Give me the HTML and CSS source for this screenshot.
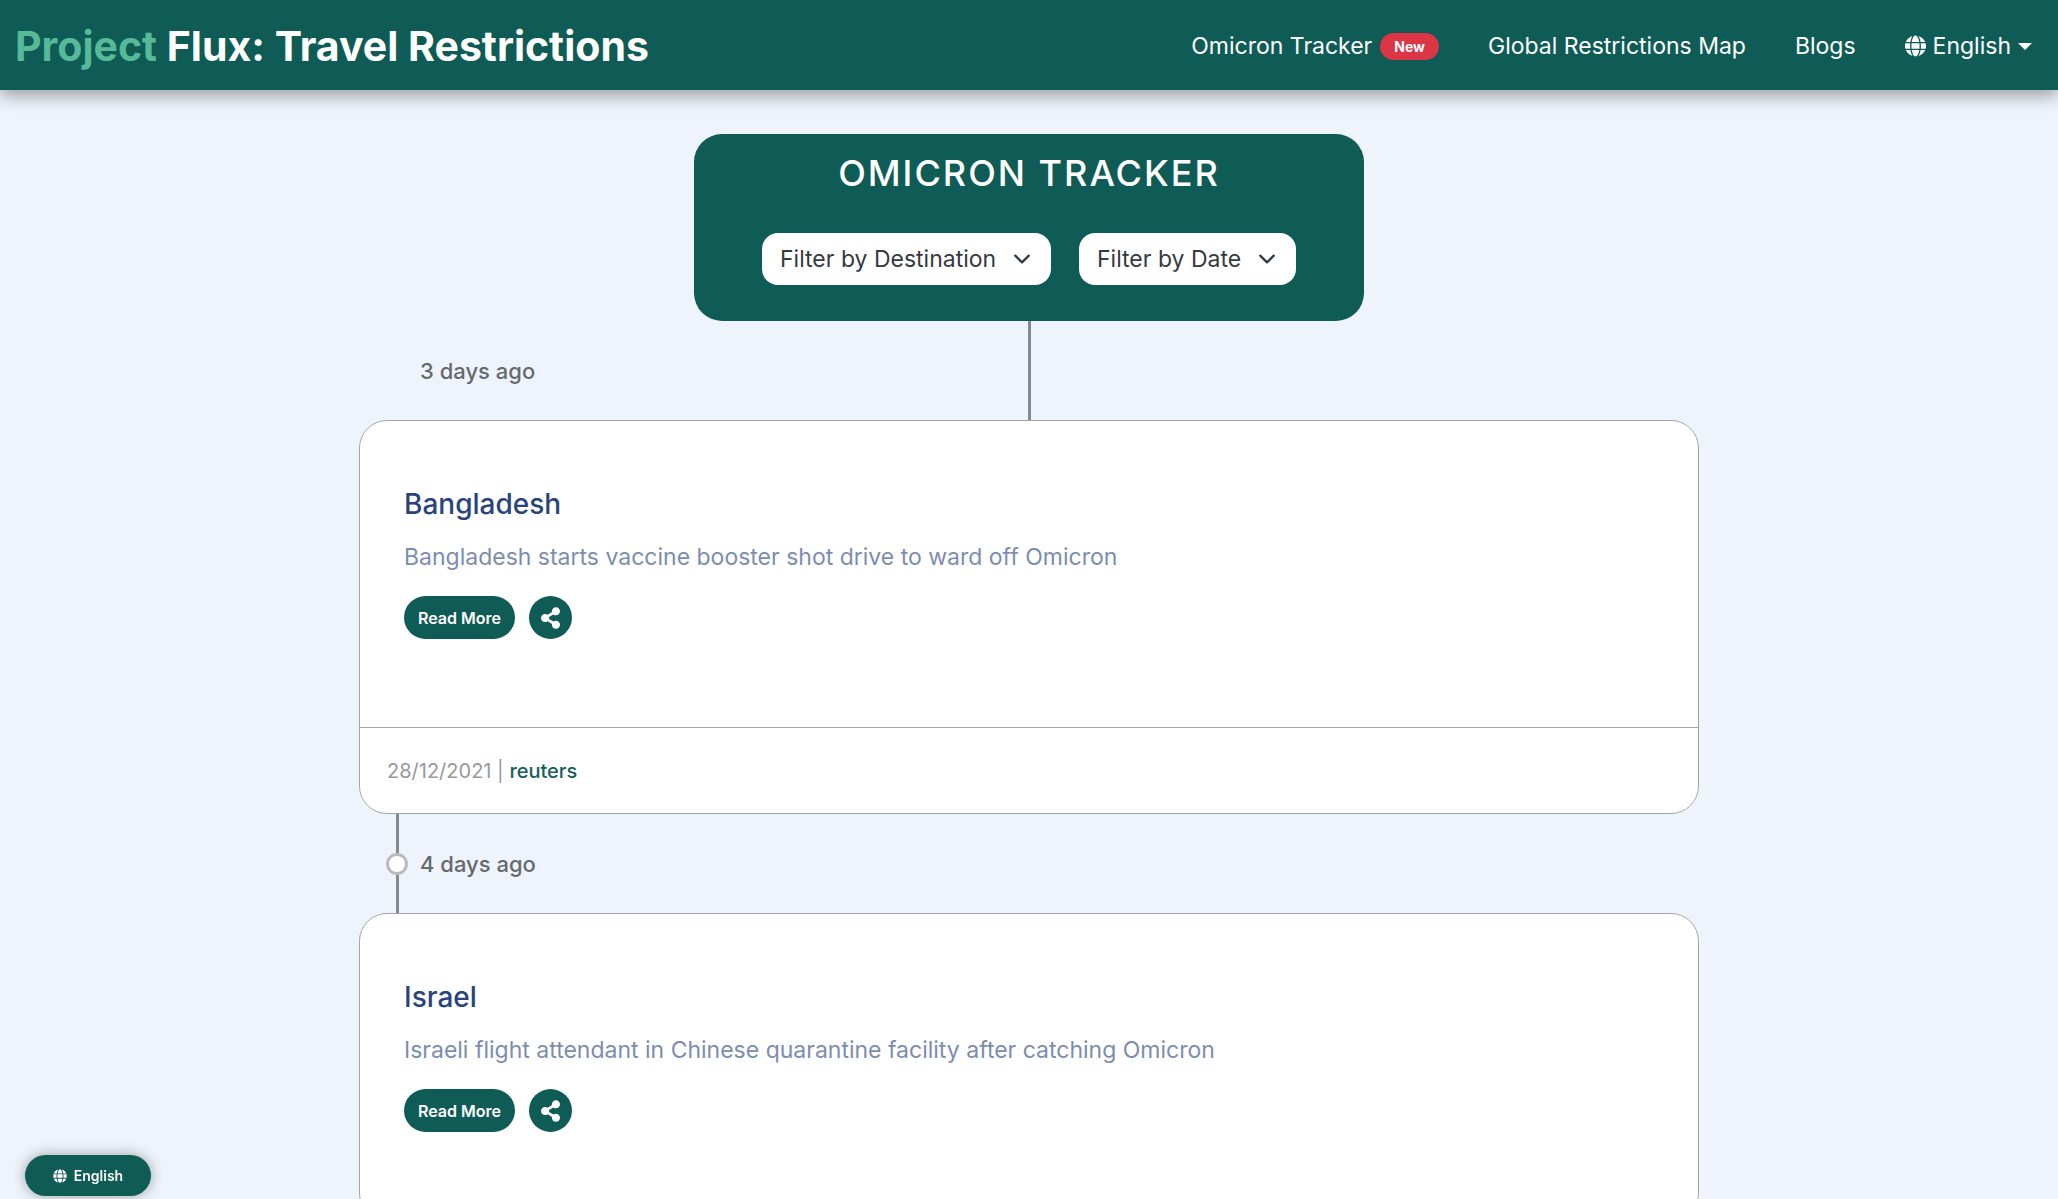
FILE: index.html
```html
<!DOCTYPE html>
<html lang="en">
<head>
<meta charset="utf-8">
<meta name="viewport" content="width=device-width, initial-scale=1">
<title>Project Flux: Travel Restrictions</title>
<link rel="stylesheet" href="styles.css">
</head>
<body>
<svg class="sprite" aria-hidden="true">
  <symbol id="globe" viewBox="0 0 496 512"><path d="M336.500 160C322 70.700 287.800 8 248 8s-74 62.700-88.500 152h177zM152 256c0 22.200 1.200 43.500 3.300 64h185.300c2.100-20.500 3.300-41.800 3.300-64s-1.200-43.500-3.300-64H155.300c-2.100 20.500-3.300 41.800-3.300 64zm324.700-96c-28.600-67.900-86.500-120.400-158-141.600 24.400 33.800 41.200 84.700 50 141.600h108zM177.200 18.400C105.800 39.600 47.800 92.100 19.300 160h108c8.700-56.900 25.500-107.800 49.900-141.600zM487.400 192H372.700c2.100 21 3.300 42.500 3.300 64s-1.200 43-3.300 64h114.600c5.500-20.500 8.600-41.800 8.600-64s-3.100-43.500-8.500-64zM120 256c0-21.500 1.200-43 3.300-64H8.600C3.200 212.500 0 233.800 0 256s3.200 43.500 8.600 64h114.600c-2-21-3.200-42.500-3.200-64zm39.500 96c14.500 89.300 48.700 152 88.500 152s74-62.700 88.500-152h-177zm159.300 141.600c71.400-21.200 129.400-73.700 158-141.600h-108c-8.800 56.900-25.600 107.800-50 141.600zM19.300 352c28.600 67.900 86.500 120.400 158 141.600-24.400-33.800-41.200-84.700-50-141.600h-108z"/></symbol>
  <symbol id="share" viewBox="0 0 448 512"><path d="M352 320c-22.600 0-43.400 7.800-59.800 20.900l-102.500-64.100a96.600 96.600 0 0 0 0-41.600l102.500-64.100C308.600 184.200 329.400 192 352 192c53 0 96-43 96-96S405 0 352 0s-96 43-96 96c0 7.200.8 14.100 2.300 20.800l-102.500 64.100C139.400 167.800 118.600 160 96 160c-53 0-96 43-96 96s43 96 96 96c22.600 0 43.400-7.800 59.800-20.900l102.500 64.100A96.300 96.300 0 0 0 256 416c0 53 43 96 96 96s96-43 96-96-43-96-96-96z"/></symbol>
  <symbol id="chevron" viewBox="0 0 16 16"><path d="M2 5l6 6 6-6" fill="none" stroke="#343a40" stroke-width="2" stroke-linecap="round" stroke-linejoin="round"/></symbol>
</svg>

<header class="navbar">
  <a class="brand" href="#"><span class="brand-accent">Project</span> Flux: Travel Restrictions</a>
  <nav class="nav">
    <a class="nav-link" href="#">Omicron Tracker <span class="badge">New</span></a>
    <a class="nav-link" href="#">Global Restrictions Map</a>
    <a class="nav-link" href="#">Blogs</a>
    <button class="nav-link nav-lang" type="button"><svg class="icon"><use href="#globe"/></svg>English<span class="caret"></span></button>
  </nav>
</header>

<main class="page">
  <section class="tracker">
    <h1 class="tracker-title">OMICRON TRACKER</h1>
    <form class="filters">
      <label class="filter">
        <select class="filter-select" aria-label="Filter by Destination"><option>Filter by Destination</option></select>
        <svg class="filter-icon"><use href="#chevron"/></svg>
      </label>
      <label class="filter">
        <select class="filter-select" aria-label="Filter by Date"><option>Filter by Date</option></select>
        <svg class="filter-icon"><use href="#chevron"/></svg>
      </label>
    </form>
  </section>

  <div class="interval interval-first">
    <p class="age">3 days ago</p>
  </div>
  <article class="card">
    <div class="card-body">
      <h2 class="card-title">Bangladesh</h2>
      <p class="card-text">Bangladesh starts vaccine booster shot drive to ward off Omicron</p>
      <div class="actions">
        <button class="read-more" type="button">Read More</button>
        <button class="share" type="button" aria-label="Share"><svg class="share-icon"><use href="#share"/></svg></button>
      </div>
    </div>
    <footer class="card-footer">28/12/2021 | <a class="source" href="#">reuters</a></footer>
  </article>

  <div class="interval">
    <span class="dot"></span>
    <p class="age">4 days ago</p>
  </div>
  <article class="card">
    <div class="card-body">
      <h2 class="card-title">Israel</h2>
      <p class="card-text">Israeli flight attendant in Chinese quarantine facility after catching Omicron</p>
      <div class="actions">
        <button class="read-more" type="button">Read More</button>
        <button class="share" type="button" aria-label="Share"><svg class="share-icon"><use href="#share"/></svg></button>
      </div>
    </div>
  </article>
</main>

<button class="lang-float" type="button"><svg class="icon-small"><use href="#globe"/></svg>English</button>
</body>
</html>
```

FILE: styles.css
```css
:root {
  --green: #0e5c55;
  --line: #868a8d;
  --border: #a3a6a9;
}

* {
  box-sizing: border-box;
}

body {
  margin: 0;
  height: 100vh;
  overflow: hidden;
  background: #eff4fc;
  font-family: Inter, "Open Sans", sans-serif;
  font-size: 23px;
  line-height: 32px;
}

h1,
h2,
p {
  margin: 0;
}

a {
  color: inherit;
  text-decoration: none;
}

button,
select {
  margin: 0;
  border: 0;
  font: inherit;
  cursor: pointer;
}

.sprite {
  display: none;
}

.navbar {
  position: relative;
  display: flex;
  align-items: center;
  justify-content: space-between;
  height: 90px;
  padding: 2px 26px 0 15px;
  background: var(--green);
  color: #fff;
  box-shadow: 0 6px 16px rgba(0, 0, 0, 0.35);
}

.brand {
  font-size: 41px;
  font-weight: 700;
  line-height: 48px;
}

.brand-accent {
  color: #56b998;
}

.nav {
  display: flex;
  align-items: center;
  gap: 49px;
}

.nav-link {
  display: flex;
  align-items: center;
  gap: 8px;
  padding: 0;
  background: none;
  color: #fff;
}

.nav-lang {
  gap: 7px;
}

.badge {
  padding: 0 14px;
  border-radius: 14px;
  background: #dc3545;
  font-size: 14px;
  font-weight: 700;
  line-height: 27px;
}

.icon {
  width: 21px;
  height: 22px;
  fill: currentColor;
}

.caret {
  border: 7px solid transparent;
  border-top-color: #fff;
  border-bottom: 0;
}

.page {
  width: calc(100% - 48px);
  max-width: 1340px;
  margin: 44px auto 0;
}

.tracker {
  display: flex;
  flex-direction: column;
  align-items: center;
  gap: 40px;
  width: 50%;
  margin: 0 auto;
  padding: 19px 24px 36px;
  border-radius: 28px;
  background: var(--green);
}

.tracker-title {
  color: #fff;
  font-size: 36px;
  font-weight: 500;
  line-height: 40px;
  letter-spacing: 2px;
}

.filters {
  display: flex;
  gap: 28px;
}

.filter {
  display: grid;
  align-items: center;
}

.filter-select {
  grid-area: 1 / 1;
  height: 52px;
  padding: 0 54px 0 18px;
  border-radius: 16px;
  background: #fff;
  color: #343a40;
  appearance: none;
}

.filter-icon {
  grid-area: 1 / 1;
  justify-self: end;
  width: 18px;
  height: 18px;
  margin-right: 20px;
  pointer-events: none;
}

.interval {
  display: flex;
  align-items: center;
  gap: 12px;
  height: 99px;
  padding-left: 27px;
  background: linear-gradient(var(--line), var(--line)) 37px 0 / 3px 100% no-repeat;
}

.interval-first {
  padding-left: 61px;
  background-position: 50% 0;
}

.dot {
  width: 22px;
  height: 22px;
  border: 3px solid #b9bcbf;
  border-radius: 50%;
  background: #fff;
}

.age {
  color: #66696c;
  font-size: 22px;
  font-weight: 500;
}

.card {
  border: 1px solid var(--border);
  border-radius: 28px;
  background: #fff;
}

.card-body {
  height: 306px;
  padding: 65px 44px 0;
}

.card-title {
  color: #29437c;
  font-size: 28px;
  font-weight: 500;
  line-height: 36px;
}

.card-text {
  margin: 19px 0 23px;
  color: #7c8db0;
}

.actions {
  display: flex;
  gap: 14px;
}

.read-more {
  height: 43px;
  padding: 0 14px;
  border-radius: 22px;
  background: var(--green);
  color: #fff;
  font-size: 16px;
  font-weight: 600;
}

.share {
  display: grid;
  place-items: center;
  width: 43px;
  height: 43px;
  padding: 0;
  border-radius: 50%;
  background: var(--green);
}

.share-icon {
  width: 19px;
  height: 22px;
  fill: #fff;
}

.card-footer {
  padding: 27px 27px 26px;
  border-top: 1px solid var(--border);
  color: #97999c;
  font-size: 20px;
}

.source {
  color: #175f57;
  font-weight: 500;
}

.lang-float {
  position: fixed;
  bottom: 3px;
  left: 25px;
  display: flex;
  align-items: center;
  justify-content: center;
  gap: 7px;
  width: 126px;
  height: 41px;
  padding: 0;
  border-radius: 21px;
  background: var(--green);
  color: #fff;
  font-size: 14px;
  font-weight: 600;
  box-shadow: 0 0 14px rgba(0, 0, 0, 0.35);
}

.icon-small {
  width: 14px;
  height: 14px;
  fill: currentColor;
}
```
